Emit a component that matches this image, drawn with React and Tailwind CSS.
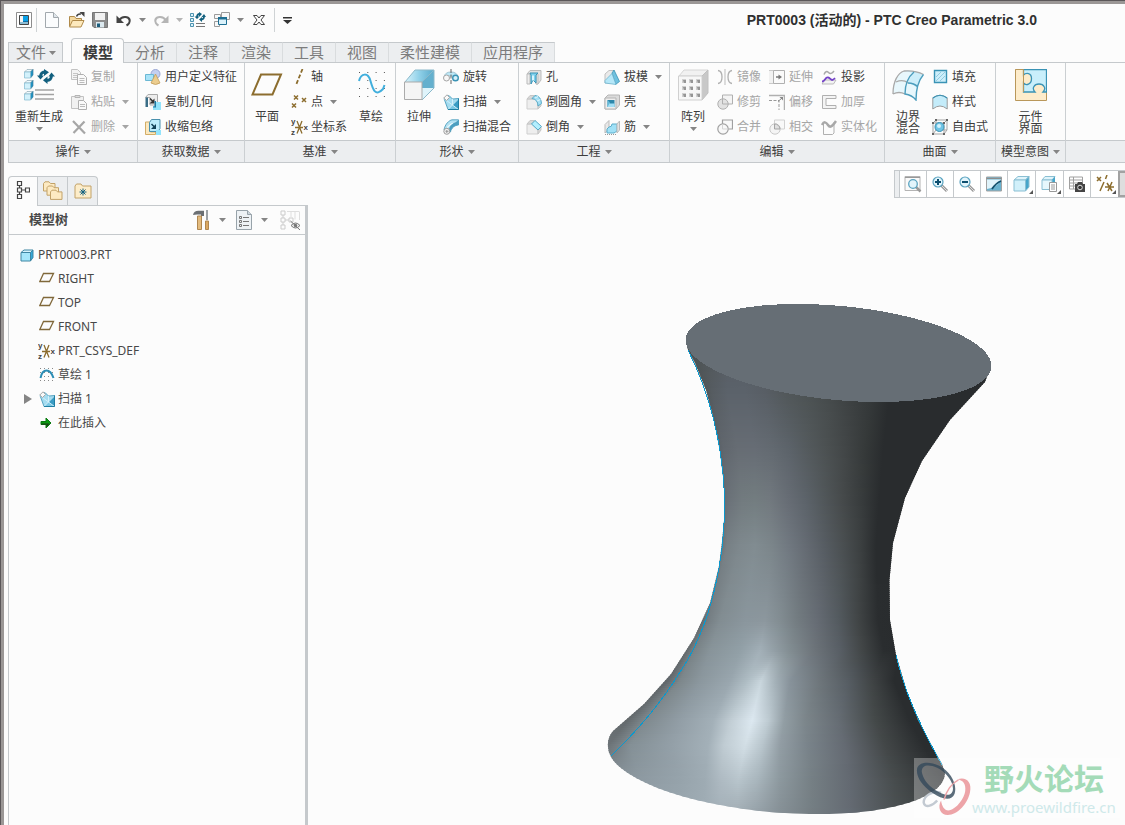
const BLUE = '#3a93b5';
const GREY = '#b0b0b0';
const GOLD = '#8c6d2e';

function Svg({ w = 16, h = 16, children }) {
  return (
    <svg
      width={w}
      height={h}
      viewBox={`0 0 ${w} ${h}`}
      fill="none"
      className="shrink-0"
      aria-hidden="true"
    >
      {children}
    </svg>
  );
}

function Caret({ color = '#858585' }) {
  return (
    <Svg w={7} h={4}>
      <path d="M0 0h7L3.500 4z" fill={color} />
    </Svg>
  );
}

function Cube({ y = 0 }) {
  return (
    <g transform={`translate(0 ${y})`}>
      <path d="M.5 3L3 .5h6L6.500 3z" fill="#eefafe" stroke="#8fa9b4" strokeWidth=".7" />
      <path d="M6.500 3L9 .5V6L6.500 9z" fill="#1f93c4" stroke="#3b7d9a" strokeWidth=".7" />
      <path d="M.5 3h6v6h-6z" fill="#d3f1fb" stroke="#7fb9d0" strokeWidth=".7" />
    </g>
  );
}

function SweepGlyph() {
  return (
    <>
      <path d="M1 4.500L6 1.500l3.500 3.500 6-.5V15.500H5z" fill="#a4dcf0" stroke={BLUE} strokeWidth=".8" />
      <path d="M9.500 11L15.500 4.500v11z" fill="#3a9cc4" />
      <path d="M5 15.500L9.500 11l6 4.500z" fill="#7cc8e4" />
      <path d="M5 15.500l4.500-4.500L1 4.500M9.500 11l6-6M9.500 11V5M9.500 11l6 4.500" stroke="#dff5fc" strokeWidth=".8" />
      <path d="M15.500 4.500v11H5" stroke="#1f7fa3" />
      <path d="M.8 4L4 .8l2.500 2.700-3 3z" stroke="#a8a8a8" fill="#fafafa" />
    </>
  );
}

function Magnifier({ sign }) {
  return (
    <Svg w={18} h={18}>
      <path d="M10.500 10.500l5.500 5.500" stroke="#9a9a9a" strokeWidth="3" />
      <path d="M11 11l5 5" stroke="#dedede" />
      <circle cx="7" cy="7" r="5" fill="#e2f4fb" stroke="#5aa3c0" strokeWidth="1.200" />
      <path d={sign === '+' ? 'M4 7h6M7 4v6' : 'M4 7h6'} stroke="#0c4f70" strokeWidth="2" />
    </Svg>
  );
}

const icons = {
  app: (
    <Svg>
      <path d="M.5.5h15v15H.5z" fill="#fff" stroke="#8d8d8d" />
      <path d="M3.500 3.500h9v9h-9z" fill="#0b6ea8" stroke="#444" />
      <path d="M4 4h3v6H4z" fill="#f4f4f4" />
      <path d="M4 10h8v2H4z" fill="#8ebdd4" />
      <path d="M7 4h5v5H7z" fill="#0aa0e6" />
    </Svg>
  ),
  newFile: (
    <Svg w={14}>
      <path d="M.5.5h8l5 5v10H.5z" fill="#fbfcfd" stroke="#a2a8ad" />
      <path d="M8.500.5v5h5" fill="#dfe5ea" stroke="#a2a8ad" />
    </Svg>
  ),
  open: (
    <Svg w={17}>
      <path d="M1.500 14V4.500h5L8 6.500h5.500V9" fill="#f4d9a0" stroke="#b08a4a" />
      <path d="M1.500 15L4.500 8.500h11.500L13 15z" fill="#fde9bd" stroke="#b08a4a" />
      <path d="M8.500 4.500Q9.500 1.500 13 2" stroke="#444" strokeWidth="1.500" />
      <path d="M11.500 0h5v5z" fill="#444" />
    </Svg>
  ),
  save: (
    <Svg>
      <path d="M.5.5h15v15H2L.5 14z" fill="#8c8c8c" stroke="#777" />
      <path d="M3 1h10v7H3z" fill="#f2f2f2" />
      <path d="M4 10h8v5.500H4z" fill="#dce9ef" />
      <path d="M5 11.500h3V15H5z" fill="#1d5e7d" />
    </Svg>
  ),
  undo: (
    <Svg>
      <path d="M3 8.500C6 4 12 4 13.500 7.500c.8 2.500-1 5-3 6" stroke="#444" strokeWidth="2.200" />
      <path d="M.5 3.500V11H8z" fill="#444" />
    </Svg>
  ),
  redo: (
    <Svg>
      <path d="M13 8.500C10 4 4 4 2.500 7.500c-.8 2.500 1 5 3 6" stroke="#b5b5b5" strokeWidth="2.200" />
      <path d="M15.500 3.500V11H8z" fill="#b5b5b5" />
    </Svg>
  ),
  regenSmall: (
    <Svg>
      <path d="M.5 1.500h3v3h-3zM.5 6.500h3v3h-3zM.5 11.500h3v3h-3z" fill="#d9f1fa" stroke="#4d93b0" />
      <path d="M6 11.500h9M6 14.500h9" stroke="#777" />
      <path d="M7 5Q7 2 9.500 2M14 4Q14 7.500 11.500 7.500" stroke="#12607f" strokeWidth="1.800" />
      <path d="M9 0l3 2-3 3zM12 5L9 7.500l3 2.500zM4.500 4.500h5L7 7zM11.500 5h4.500L14 2z" fill="#12607f" />
    </Svg>
  ),
  windows: (
    <Svg>
      <path d="M7.500.5h8v7h-8zM.5 2.500h6v4h-6zM.5 9.500h5v5h-5z" fill="#f8f8f8" stroke="#9b9b9b" />
      <path d="M4.500 5.500h8v7h-8z" fill="#dbf2fb" stroke="#1e6f93" />
      <path d="M4 5h9v2.500H4z" fill="#1e6f93" />
    </Svg>
  ),
  close: (
    <Svg w={12} h={10}>
      <path
        d="M.5.500h3.500l2 2.500L8 .5h3.500L8 5l3.500 4.500H8L6 7 4 9.500H.5L4 5z"
        fill="#fcfcfc"
        stroke="#444"
      />
    </Svg>
  ),
  more: (
    <Svg w={9} h={7}>
      <path d="M0 0h9v1.500H0zM0 3h9L4.500 7z" fill="#333" />
    </Svg>
  ),
  regenerate: (
    <Svg w={32} h={32}>
      <g transform="translate(1 0)">
        <Cube />
        <Cube y={11} />
        <Cube y={22} />
      </g>
      <path d="M12 21h19M12 25.500h19M12 30h19" stroke="#a2a2a2" strokeWidth="1.600" />
      <path d="M17.500 7.500Q17.500 3 22.500 3M28.500 6.500Q28.500 11.500 23.500 11.500" stroke="#12607f" strokeWidth="2.800" />
      <path d="M21 0l5 3.200-5 3.800zM24.500 7.500L20 11.300l4.500 3.700zM14 6.500h7L17.500 10.500zM25.500 7.500h6.500L28.500 3.500z" fill="#12607f" />
    </Svg>
  ),
  copy: (
    <Svg>
      <path d="M.5.5h6l3 3v7h-9z" fill="#f4f4f4" stroke="#c2c2c2" />
      <path d="M2 4.500h5M2 6.500h5M2 8.500h4" stroke="#c6c6c6" />
      <path d="M6.500 5.500h6l3 3v7h-9z" fill="#fafafa" stroke="#b0b0b0" />
      <path d="M8.500 9.500h5M8.500 11.500h5M8.500 13.500h5" stroke="#bbb" />
    </Svg>
  ),
  paste: (
    <Svg>
      <path d="M.5 2.500h12v12H.5z" fill="#f1f1f1" stroke="#c2c2c2" />
      <path d="M4 3.500V1.500h5v2z" fill="#ddd" stroke="#b4b4b4" />
      <path d="M7.500 6.500h5l3 3v6h-8z" fill="#fafafa" stroke="#b0b0b0" />
      <path d="M9 10.500h5M9 12.500h5" stroke="#bbb" />
    </Svg>
  ),
  del: (
    <Svg>
      <path d="M2 2l12 12.500M13.500 2.500L2.500 14" stroke="#a6a6a6" strokeWidth="2.200" />
    </Svg>
  ),
  udf: (
    <Svg>
      <circle cx="10.500" cy="5" r="4.500" fill="#c3cff0" stroke="#98a6d3" />
      <path d="M.5 5.500h8v6h-8z" fill="#a8e3f8" stroke="#6bb8d4" />
      <path d="M10.500 5l4.500 9q-4.500 3-9 0z" fill="#eccd8e" stroke="#c09a58" strokeWidth=".8" />
    </Svg>
  ),
  copyGeom: (
    <Svg>
      <path d="M.5 3.500L3 .5h9.500V8L10 11H5V3.500z" fill="#ededed" stroke="#aaa" />
      <path d="M.5 3.500H3V13H.5z" fill="#3a6d86" />
      <path d="M5 4.500l3 3" stroke="#333" strokeWidth="1.500" />
      <path d="M9.500 4.500v5h-5z" fill="#333" />
      <path d="M10.500 8h5.500v8h-8V12h2.500z" fill="#93e4fc" />
      <path d="M9.500 12.500V7h1.500v6.500H8v-1z" fill="#1e7ba3" />
    </Svg>
  ),
  shrink: (
    <Svg>
      <path d="M.5 3h5v10h5v2.500H.5z" fill="#fbe8bf" stroke="#d2ad67" />
      <path d="M4.500 3.500l2-3h8.500v9l-2 3H4.500z" fill="#bdebfa" stroke="#4a90ad" />
      <path d="M6.500 5l3 3" stroke="#113f55" strokeWidth="1.500" />
      <path d="M11 5v5H6z" fill="#113f55" />
      <path d="M11 11h5v5h-5z" fill="#93e4fc" />
    </Svg>
  ),
  plane: (
    <Svg w={32} h={32}>
      <path d="M10 5.500h20L21.500 25.500h-20z" stroke={GOLD} strokeWidth="2" />
    </Svg>
  ),
  axis: (
    <Svg w={17}>
      <path d="M11.500 0L5 16" stroke={GOLD} strokeWidth="1.800" strokeDasharray="4 2" />
    </Svg>
  ),
  point: (
    <Svg w={17}>
      <path
        d="M3 1.500l4 4M7 1.500l-4 4M11 4l4 4M15 4l-4 4M1 9.500l4 4M5 9.500l-4 4"
        stroke={GOLD}
        strokeWidth="1.500"
      />
    </Svg>
  ),
  csys: (
    <Svg w={17} h={17}>
      <path d="M4 8.500h8M6 2l5 12.500M11 2L6 14.500" stroke={GOLD} strokeWidth="1.300" />
      <g fill="#444" fontSize="8" fontWeight="700" fontFamily="Liberation Sans, sans-serif">
        <text x="0" y="5">y</text>
        <text x="0" y="16">z</text>
        <text x="12.500" y="11">x</text>
      </g>
    </Svg>
  ),
  sketch: (
    <Svg w={32} h={32}>
      <path d="M4 3.500h26M4 11.500h26M4 19.500h26M4 27.500h26" stroke="#555" strokeDasharray="1 7.300" />
      <path d="M4 12C6 4 13 3 15.500 12s5 16 12.500 8l1.500-4" stroke="#41afdd" strokeWidth="2" />
    </Svg>
  ),
  extrude: (
    <Svg w={32} h={32}>
      <defs>
        <linearGradient id="extrudeTop" x1="0" x2="1">
          <stop offset="0" stopColor="#d8f3fc" />
          <stop offset=".5" stopColor="#8fd0e8" />
          <stop offset="1" stopColor="#58a9ca" />
        </linearGradient>
      </defs>
      <path d="M2 13L12 1h19L19 13z" fill="url(#extrudeTop)" />
      <path d="M19 13L31 1v18L19 31z" fill="#dff4fb" />
      <path d="M19 13L31 1v18h-12z" fill="#64b0ce" />
      <path d="M2 13L12 1h19v18L19 31M19 13L31 1" stroke="#8bb9ca" />
      <path d="M1.500 13h17.500v17.500H1.500z" fill="#f5f5f5" stroke="#ababab" />
    </Svg>
  ),
  revolve: (
    <Svg>
      <path d="M1 8Q2 3 8 3t7 5l-4-1H5z" fill="#bce7f6" stroke="#a0c4d2" />
      <circle cx="3.500" cy="9" r="3" fill="#f7f7f7" stroke="#a5a5a5" />
      <circle cx="12.500" cy="9" r="2.800" fill="#d4f0fa" stroke={BLUE} strokeWidth="1.400" />
      <path d="M8 0v16" stroke="#666" strokeDasharray="4 1.500" />
    </Svg>
  ),
  sweep: (
    <Svg>
      <SweepGlyph />
    </Svg>
  ),
  sweptBlend: (
    <Svg>
      <path d="M1 11C2 5 6 1.500 9 .8h6.500V6C12 6 8 9 7.500 13z" fill="#b5e2f2" stroke={BLUE} strokeWidth=".8" />
      <path d="M4 8.500Q7 4 14 3.500" stroke="#fff" />
      <path d="M15.500 1v5C12 6 8 9 7.500 13L6 11c0-4 4-7 7-8z" fill="#4d9fc0" />
      <circle cx="3.800" cy="12.300" r="3" fill="#f1f1f1" stroke="#9d9d9d" />
      <path d="M3.800 11v3M2.500 12.300h3" stroke="#999" />
    </Svg>
  ),
  hole: (
    <Svg>
      <path d="M1 5l3-3.500h11V11l-3 4h-2V5z" fill="#e2e2e2" stroke="#bbb" />
      <path d="M1 5h3v10H1zM10 5h2v10h-2z" fill="#ededed" stroke="#bbb" />
      <path d="M4 4h8l-2 2v8l-3-3-2 4V6z" fill="#7fd2ef" stroke={BLUE} />
      <path d="M7 6.500v5" stroke="#d9f4fd" strokeWidth="2" />
    </Svg>
  ),
  round: (
    <Svg>
      <path d="M1 5h6q5 0 5 5v5H1z" fill="#eee" stroke="#cfcfcf" />
      <path d="M1 5l3-3.500h5L7 5zM12 9l3 1v2l-3 3z" fill="#d8d8d8" stroke="#c6c6c6" />
      <path d="M6 4.500L9 1.500q6 .5 6.500 8L12 12Q12 5.500 6 4.500z" fill="#a5e1f6" stroke="#58a9c6" />
      <path d="M9 4l3-1.500M11 7l3.500-1.500" stroke="#e0f6fd" />
    </Svg>
  ),
  chamfer: (
    <Svg>
      <path d="M1 5h5l6 6v4H1z" fill="#eee" stroke="#cfcfcf" />
      <path d="M1 5l3-3.500h5L6 5zM12 11l3-3v3l-3 4z" fill="#d8d8d8" stroke="#c6c6c6" />
      <path d="M5.500 5L9 1.500l6.500 6L12 11z" fill="#b3efff" stroke="#58a9c6" />
    </Svg>
  ),
  draft: (
    <Svg>
      <path d="M1 5l4-3.500h5V14H1z" fill="#eaeaea" stroke="#c0c0c0" />
      <path d="M8 4l2-3 5.500 11.500-4 3z" fill="#6fc1df" stroke={BLUE} strokeWidth=".8" />
      <path d="M1 11.500l7-7 4 11L1 14z" fill="#b5e7f8" stroke="#6db4ce" strokeWidth=".8" />
    </Svg>
  ),
  shell: (
    <Svg>
      <path d="M1 4l3-3h11.500v10L12 15H1z" fill="#dadada" stroke="#b5b5b5" />
      <path d="M1 4h11v11H1z" fill="#ededed" stroke="#b5b5b5" />
      <path d="M3.500 6h7v7h-7z" fill="#2d87aa" />
      <path d="M3.500 13V6L6 8.500V13z" fill="#66b9d8" />
      <path d="M5.500 9.500h5V13h-7z" fill="#a2dff5" />
    </Svg>
  ),
  rib: (
    <Svg>
      <path d="M1 5.500l4-4v8L1 14z" fill="#e8e8e8" stroke="#bbb" />
      <path d="M5 8q3 0 3-3h5v7l-3 2H3v-4z" fill="#a0e1f7" stroke="#5cadca" />
      <path d="M1 15.500h12" stroke="#999" strokeDasharray="1 1" />
      <path d="M13 5l2.500-3v9L13 14z" fill="#e2e2e2" stroke="#bbb" />
    </Svg>
  ),
  pattern: (
    <Svg w={32} h={32}>
      <path d="M2 7l5-6h24l-6 6z" fill="#f1f1f1" stroke="#d6d6d6" />
      <path d="M25 7l6-6v23l-6 7z" fill="#c8c8c8" stroke="#c0c0c0" />
      <path d="M1.500 7H25v24H1.500z" fill="#f7f7f7" stroke="#d0d0d0" />
      {[10, 17, 24].map((y) =>
        [5, 12, 19].map((x) => (
          <g key={`${x}-${y}`}>
            <path d={`M${x} ${y}h4v4h-4z`} fill="#cfcfcf" />
            <path d={`M${x + 1} ${y + 1}h3v3h-2z`} fill="#959595" />
          </g>
        )),
      )}
    </Svg>
  ),
  mirror: (
    <Svg>
      <path d="M8 0v16" stroke="#bbb" />
      <path d="M1 1.500Q5 2 5 8t-4 6.500M15 1.500Q11 2 11 8t4 6.500" stroke={GREY} strokeWidth="1.300" />
    </Svg>
  ),
  trim: (
    <Svg>
      <path d="M5.500 1h10v9h-10z" fill="#f4f4f4" stroke={GREY} />
      <circle cx="6" cy="10" r="5.200" stroke={GREY} fill="#e2e2e2" />
      <path d="M5.500 10V5M5.500 10h6" stroke={GREY} />
    </Svg>
  ),
  merge: (
    <Svg>
      <path d="M5.500 1h10v9h-10z" fill="#f9f9f9" stroke="#a0a0a0" strokeWidth="1.200" />
      <circle cx="6" cy="10" r="5.200" stroke="#a0a0a0" strokeWidth="1.200" fill="#f8f8f8" />
      <path d="M5.500 10V5M5.500 10h6" stroke="#d5d5d5" />
    </Svg>
  ),
  extend: (
    <Svg>
      <path d="M0 1.500h4.500v13H0" fill="#f1f1f1" stroke="#c9c9c9" />
      <path d="M4.500 1.500h11v13h-11z" stroke={GREY} fill="#fafafa" />
      <path d="M7 8h3" stroke="#777" strokeWidth="1.500" />
      <path d="M9.500 5.500L13 8l-3.500 2.500z" fill="#777" />
    </Svg>
  ),
  offset: (
    <Svg>
      <path d="M0 1.500h15.500V16" stroke={GREY} strokeWidth="1.500" />
      <path d="M0 6.500h10V16" stroke="#999" strokeDasharray="3 1.500" />
      <path d="M9 7.500L13 4" stroke="#888" />
      <path d="M10.500 3H14v3.500z" fill="#888" />
    </Svg>
  ),
  intersect: (
    <Svg>
      <path d="M5.500 1h10v9h-10z" fill="#f9f9f9" stroke="#d2d2d2" />
      <circle cx="6" cy="10" r="5.200" stroke="#c9c9c9" fill="#f4f4f4" />
      <path d="M5.500 5a5.200 5.200 0 015.500 5H5.500z" stroke="#a5a5a5" fill="#e0e0e0" />
    </Svg>
  ),
  project: (
    <Svg>
      <path d="M3 5.500Q5 1 7.500 3.500T13 2" stroke="#aaa" strokeWidth="1.500" />
      <path d="M1 15l3-4h11l-2.500 4z" stroke="#bbb" fill="#f3f3f3" />
      <path d="M1 12.500c3 0 3-4.500 6-4s3 5 7 .5" stroke="#7442c8" strokeWidth="1.800" />
    </Svg>
  ),
  thicken: (
    <Svg>
      <path d="M15 1.500H1.500v13H15v-3H5v-7h10z" stroke={GREY} fill="#f4f4f4" />
    </Svg>
  ),
  solidify: (
    <Svg>
      <path d="M2.500 5v10.500h9L13 14V3" stroke={GREY} />
      <path d="M1 6c2-4 4-3 6 0s4 2 8-4" stroke="#a8a8a8" strokeWidth="2.500" />
    </Svg>
  ),
  boundary: (
    <Svg w={32} h={32}>
      <path d="M1 25C1 12 6 4 12 2q11-1 19.500 3.500C26 12 25 22 24 31q-6-7-11-6-6-3-12 0z" fill="#e8f7fc" />
      <path d="M12 2q11-1 19.500 3.500C28 10 26 14 25.500 20Q21 14 14 14L21 4z" fill="#cdeefa" />
      <path d="M1 25C1 12 6 4 12 2q11-1 19.500 3.500M1 25q6-3 12 0M4 13q7-3 12 1" stroke="#a9a9a9" strokeWidth="1.300" />
      <path d="M22 3c-6 5-9 13-9 22q7 1 11 6c0-10 2-19 7.500-25.500M16 14q6 0 10 4" stroke="#4b9dbd" strokeWidth="1.400" />
    </Svg>
  ),
  fill: (
    <Svg>
      <path d="M2.500 1.500h12v12h-12z" fill="#cdeefa" stroke={BLUE} strokeWidth="1.400" />
      <path d="M4 8l5-5M4 12l9-9M8 12l5-5" stroke="#93cbe0" />
    </Svg>
  ),
  style: (
    <Svg>
      <path d="M.8 4Q8-1.500 15.200 4v11Q8 9 .8 15z" fill="#c4ecfa" stroke="#9a9a9a" />
      <path d="M.8 4Q8-1.500 15.200 4" stroke={BLUE} strokeWidth="1.200" />
    </Svg>
  ),
  freestyle: (
    <Svg>
      <path d="M1 4l3-3h11v10l-3 4H1zM1 4h11v11M12 4l3-3M4 1v10H15M4 11l-3 4" stroke="#a5a5a5" />
      <circle cx="7.500" cy="8" r="4.500" fill="#72c5e6" stroke={BLUE} />
      <circle cx="7" cy="7" r="2" fill="#d6f3fd" />
      <path d="M0 3h2v2H0zM11 3h2v2h-2zM0 14h2v2H0zM11 14h2v2h-2zM3 0h2v2H3zM14 0h2v2h-2z" fill="#666" />
    </Svg>
  ),
  component: (
    <Svg w={32} h={32}>
      <path d="M.5.5h31v31H.5z" fill="#fdeccb" stroke="#b9975a" />
      <path
        d="M8.500.5V6c2.500-2.500 8-2.500 8 3.500s-5.500 7.500-8 4.500v9H20c-3.500-3.500-1-8 4-8s7.500 4.500 4 8h3.500V.5z"
        fill="#c9effb"
        stroke="#3a93b5"
        strokeWidth="1.300"
      />
      <path d="M.5.5h8v22.500" stroke="#b9975a" />
    </Svg>
  ),
  treeTab: (
    <Svg w={14} h={20}>
      <path
        d="M1.500 1.500h4v4h-4zM1.500 8h4v4h-4zM1.500 14.500h4v4h-4zM9.500 8h4v4h-4zM3.500 5.500V8M3.500 12v2.500M5.500 10h4"
        stroke="#444"
        strokeWidth="1.200"
      />
    </Svg>
  ),
  foldersTab: (
    <Svg w={20} h={20}>
      {[0, 3.500, 7].map((d) => (
        <path
          key={d}
          d="M.5 10V2.500L2 .8h4l1.500 1.700H12V10z"
          transform={`translate(${d} ${d * 1.2})`}
          fill="#fdeac2"
          stroke="#c2a268"
        />
      ))}
    </Svg>
  ),
  starTab: (
    <Svg w={18} h={16}>
      <path d="M1 15V3l1.500-2H7l1.500 2H17v12z" fill="#fdedca" stroke="#c2a268" />
      <path d="M9 5.500v7M5.500 9h7M6.500 6.500l5 5M11.500 6.500l-5 5" stroke="#12607f" />
    </Svg>
  ),
  tools: (
    <Svg w={17} h={20}>
      <path d="M0 5Q1 .5 6 .8h5V6H8V4.500H4z" fill="#6b6f73" />
      <path d="M4.500 6h4v13.500h-4z" fill="#e3bb7e" stroke="#b08750" />
      <path d="M14 0v10" stroke="#858b90" strokeWidth="1.600" />
      <path d="M12.500 11h3v8.500h-3z" fill="#dba863" stroke="#b08750" />
    </Svg>
  ),
  list: (
    <Svg w={16} h={20}>
      <path d="M.5.5h11l4 4v15H.5z" fill="#eef2f5" stroke="#98a3aa" />
      <path d="M11.500.5v4h4" stroke="#98a3aa" fill="#cdd6dc" />
      <path d="M7 7.500h6M7 11.500h6M7 15.500h6" stroke="#777" />
      <path d="M3.500 6.500h2v2h-2zM3.500 10.500h2v2h-2zM3.500 14.500h2v2h-2z" stroke="#777" />
    </Svg>
  ),
  hideTree: (
    <Svg w={21} h={20}>
      <path d="M1 1h4v4H1zM1 8h4v4H1zM1 15h4v4H1zM9 8h4v4H9zM3 5v3M3 12v3M5 10h4" stroke="#ccc" />
      <path d="M7 1.500h12M11 1.500V7M15 1.500v8M19.500 1.500V10" stroke="#dedede" />
      <path d="M11 15.500q4.500-5 9 0-4.500 5-9 0z" stroke="#777" fill="#eee" />
      <circle cx="15.500" cy="15.500" r="1.700" fill="#777" />
      <path d="M10.500 11l9.500 9" stroke="#777" />
    </Svg>
  ),
  part: (
    <Svg w={14} h={13}>
      <path d="M1 3.500L4 1h9l-2.500 2.500z" fill="#d7f4fd" stroke="#3f86a3" />
      <path d="M10.500 3.500L13 1v7.500l-2.500 3.500z" fill="#36a8d8" stroke="#3f86a3" />
      <path d="M1 3.500h9.500V12H1z" fill="#a5e7fb" stroke="#3f86a3" />
    </Svg>
  ),
  planeSmall: (
    <Svg>
      <path d="M4.500 2.500h10l-4 8H.8z" stroke="#80683a" strokeWidth="1.300" />
    </Svg>
  ),
  sketchSmall: (
    <Svg>
      <path d="M1 1.500h14M1 5.500h14M1 9.500h14M1 13.500h14" stroke="#888" strokeDasharray="1 3" />
      <path d="M1.500 11Q3 3.500 7.500 3.500T14.500 11" stroke="#2b8db5" strokeWidth="2" />
    </Svg>
  ),
  insert: (
    <Svg w={16} h={12}>
      <path d="M2 4.500h5V1l5 5-5 5V7.500H2z" fill="#0a9b12" stroke="#0a7a10" />
      <path d="M2.500 6.500h8L7.500 10V7.500h-5z" fill="#1d3b16" />
    </Svg>
  ),
  refit: (
    <Svg w={18} h={18}>
      <path d="M1 1.500h15v14H1z" fill="#fafafa" stroke="#b4b4b4" />
      <path d="M1 2.500h15" stroke="#999" />
      <path d="M12 12l4.500 4.500" stroke="#9a9a9a" strokeWidth="2.500" />
      <circle cx="9" cy="9" r="4.300" fill="#e2f4fb" stroke="#5aa3c0" strokeWidth="1.300" />
    </Svg>
  ),
  zoomIn: <Magnifier sign="+" />,
  zoomOut: <Magnifier sign="-" />,
  repaint: (
    <Svg>
      <path d="M.5 1h15v14H.5z" fill="#6ab2ce" stroke="#a2a2a2" />
      <path d="M1 3.500H15Q12 11 1 13z" fill="#e0f3fa" />
      <path d="M.5 2.500h15" stroke="#8c8c8c" />
      <path d="M6 13Q10 7 15 5" stroke="#12506c" strokeWidth="1.800" />
    </Svg>
  ),
  display: (
    <Svg w={18} h={18}>
      <path d="M1 5l4-3.500h11L12.500 5z" fill="#e0f4fb" stroke="#8abfd3" />
      <path d="M12.500 5L16 1.500V12l-3.500 4z" fill="#46a5ca" stroke="#8abfd3" />
      <path d="M1 5h11.500v11H1z" fill="#d1f0fa" stroke="#8abfd3" />
    </Svg>
  ),
  views: (
    <Svg w={18} h={18}>
      <path d="M1 5l3-3.500h10L11 5z" fill="#e0f4fb" stroke="#8abfd3" />
      <path d="M11 5l3-3.500V11l-3 3.500z" fill="#46a5ca" />
      <path d="M1 5h10v9.500H1z" fill="#e6f7fc" stroke="#8abfd3" />
      <path d="M8.500 7.500h7v9h-7z" fill="#fff" stroke="#999" />
      <path d="M10 10h4M10 12h4M10 14h4" stroke="#999" />
    </Svg>
  ),
  camera: (
    <Svg w={18} h={18}>
      <path d="M1.500 2h13v12h-13zM1.500 5h13M1.500 8h13M1.500 11h13M5.500 2v12" stroke="#a0a0a0" />
      <path d="M7 9h2l1-2h4l1 2h2v8H7z" fill="#444" />
      <circle cx="12" cy="12.500" r="2.300" fill="#333" stroke="#ddd" />
    </Svg>
  ),
  datums: (
    <Svg w={18} h={18}>
      <path d="M1 2l4 4M5 2L1 6M11 0L9.500 4M8 7L4 16M9 12h9M11 8l5 8M16 7l-4 9" stroke={GOLD} strokeWidth="1.500" />
    </Svg>
  ),
};

function Divider() {
  return <div className="h-6 w-px bg-[#cfd3d5]" />;
}

function QuickButton({ icon, label, menu, faded }) {
  return (
    <div className="flex items-center">
      <button type="button" aria-label={label} className="flex h-6 w-6 items-center justify-center">
        {icons[icon]}
      </button>
      {menu && (
        <button type="button" aria-label={`${label}菜单`} className="flex h-6 w-[13px] items-center justify-center">
          <Caret color={faded ? '#b5b5b5' : '#858585'} />
        </button>
      )}
    </div>
  );
}

function TitleBar() {
  return (
    <header className="flex h-[34px] items-center pb-[2px] pl-2">
      <QuickButton icon="app" label="窗口" />
      <Divider />
      <div className="mx-[3px] flex">
        <QuickButton icon="newFile" label="新建" />
        <QuickButton icon="open" label="打开" />
        <QuickButton icon="save" label="保存" />
        <QuickButton icon="undo" label="撤消" menu />
        <QuickButton icon="redo" label="重做" menu faded />
        <QuickButton icon="regenSmall" label="重新生成" />
        <QuickButton icon="windows" label="切换窗口" menu />
        <QuickButton icon="close" label="关闭" />
      </div>
      <Divider />
      <QuickButton icon="more" label="自定义" />
      <h1 className="ml-auto mr-[88px] whitespace-nowrap text-sm font-bold text-[#303030]">
        PRT0003 (活动的) - PTC Creo Parametric 3.0
      </h1>
    </header>
  );
}

const tabs = ['模型', '分析', '注释', '渲染', '工具', '视图', '柔性建模', '应用程序'];

function RibbonTabs() {
  return (
    <nav className="flex items-end pl-1 text-[15px] leading-[18px] text-[#7c7c7c]">
      <button
        type="button"
        className="mr-2 flex h-5 w-[55px] items-center gap-[3px] border border-b-0 border-[#c5c9cc] bg-[#eceef0] pl-[7px]"
      >
        文件
        <Caret />
      </button>
      {tabs.map((tab, i) => (
        <button
          key={tab}
          type="button"
          className={
            i === 0
              ? 'relative -mb-px h-[25px] rounded-t-sm border border-b-0 border-[#c5c9cc] bg-[#fcfcfc] pl-[11px] pr-[10px] pt-[3px] font-bold text-[#3c3c3c]'
              : 'h-5 border-r border-t border-r-[#d9dcde] border-t-[#c5c9cc] bg-[#eceef0] px-[11px]'
          }
        >
          {tab}
        </button>
      ))}
    </nav>
  );
}

function SmallButton({ icon, label, menu, disabled }) {
  return (
    <button
      type="button"
      disabled={disabled}
      className={`flex h-6 items-center gap-1 whitespace-nowrap ${disabled ? 'text-[#a6a6a6]' : 'text-[#3c3c3c]'}`}
    >
      <span className="flex w-4 justify-center">{icons[icon]}</span>
      {label}
      {menu && (
        <span className="ml-[3px]">
          <Caret color={disabled ? '#a5a5a5' : '#858585'} />
        </span>
      )}
    </button>
  );
}

function Stack({ items }) {
  return (
    <div className="flex h-[74px] flex-col items-start justify-between">
      {items.map((item) => (
        <SmallButton key={item.label} {...item} />
      ))}
    </div>
  );
}

function BigButton({ icon, label, menu }) {
  return (
    <button type="button" className="flex flex-col items-center pt-1 text-[#3c3c3c]">
      {icons[icon]}
      <span className="mt-[10px] whitespace-pre leading-3">{label}</span>
      {menu && (
        <span className="mt-1 flex">
          <Caret />
        </span>
      )}
    </button>
  );
}

function Group({ title, className, children }) {
  return (
    <section className="flex shrink-0 flex-col border-r border-[#cbcfd2]">
      <div className={`flex h-[77px] items-start pt-[2px] ${className}`}>{children}</div>
      <button
        type="button"
        className="flex h-[22px] items-center justify-center gap-1 border-t border-[#c5c9cc] text-[#3c3c3c]"
      >
        {title}
        <Caret />
      </button>
    </section>
  );
}

function Ribbon() {
  return (
    <div className="ml-1 flex overflow-hidden border-y border-l border-[#c5c9cc] bg-[linear-gradient(#fcfcfc_77px,#c5c9cc_77px,#c5c9cc_78px,#eceef0_78px)] text-xs">
      <Group title="操作" className="w-32 gap-2 pl-[6px]">
        <BigButton icon="regenerate" label="重新生成" menu />
        <Stack
          items={[
            { icon: 'copy', label: '复制', disabled: true },
            { icon: 'paste', label: '粘贴', menu: true, disabled: true },
            { icon: 'del', label: '删除', menu: true, disabled: true },
          ]}
        />
      </Group>
      <Group title="获取数据" className="w-[106px] pl-[7px]">
        <Stack
          items={[
            { icon: 'udf', label: '用户定义特征' },
            { icon: 'copyGeom', label: '复制几何' },
            { icon: 'shrink', label: '收缩包络' },
          ]}
        />
      </Group>
      <Group title="基准" className="w-[150px] gap-2 pl-[6px]">
        <BigButton icon="plane" label="平面" />
        <Stack
          items={[
            { icon: 'axis', label: '轴' },
            { icon: 'point', label: '点', menu: true },
            { icon: 'csys', label: '坐标系' },
          ]}
        />
        <BigButton icon="sketch" label="草绘" />
      </Group>
      <Group title="形状" className="w-[122px] gap-2 pl-[7px]">
        <BigButton icon="extrude" label="拉伸" />
        <Stack
          items={[
            { icon: 'revolve', label: '旋转' },
            { icon: 'sweep', label: '扫描', menu: true },
            { icon: 'sweptBlend', label: '扫描混合' },
          ]}
        />
      </Group>
      <Group title="工程" className="w-[150px] gap-2 pl-[7px]">
        <Stack
          items={[
            { icon: 'hole', label: '孔' },
            { icon: 'round', label: '倒圆角', menu: true },
            { icon: 'chamfer', label: '倒角', menu: true },
          ]}
        />
        <Stack
          items={[
            { icon: 'draft', label: '拔模', menu: true },
            { icon: 'shell', label: '壳' },
            { icon: 'rib', label: '筋', menu: true },
          ]}
        />
      </Group>
      <Group title="编辑" className="w-[214px] gap-2 pl-[7px]">
        <BigButton icon="pattern" label="阵列" menu />
        <Stack
          items={[
            { icon: 'mirror', label: '镜像', disabled: true },
            { icon: 'trim', label: '修剪', disabled: true },
            { icon: 'merge', label: '合并', disabled: true },
          ]}
        />
        <Stack
          items={[
            { icon: 'extend', label: '延伸', disabled: true },
            { icon: 'offset', label: '偏移', disabled: true },
            { icon: 'intersect', label: '相交', disabled: true },
          ]}
        />
        <Stack
          items={[
            { icon: 'project', label: '投影' },
            { icon: 'thicken', label: '加厚', disabled: true },
            { icon: 'solidify', label: '实体化', disabled: true },
          ]}
        />
      </Group>
      <Group title="曲面" className="w-[110px] gap-2 pl-[7px]">
        <BigButton icon="boundary" label={'边界\n混合'} />
        <Stack
          items={[
            { icon: 'fill', label: '填充' },
            { icon: 'style', label: '样式' },
            { icon: 'freestyle', label: '自由式' },
          ]}
        />
      </Group>
      <Group title="模型意图" className="w-[69px] justify-center">
        <BigButton icon="component" label={'元件\n界面'} />
      </Group>
    </div>
  );
}

const treeItems = [
  { icon: 'planeSmall', label: 'RIGHT' },
  { icon: 'planeSmall', label: 'TOP' },
  { icon: 'planeSmall', label: 'FRONT' },
  { icon: 'csys', label: 'PRT_CSYS_DEF' },
  { icon: 'sketchSmall', label: '草绘 1' },
  { icon: 'sweep', label: '扫描 1', expandable: true },
  { icon: 'insert', label: '在此插入' },
];

function ModelTree() {
  return (
    <aside className="ml-1 flex w-[300px] shrink-0 flex-col pt-[13px]">
      <div className="flex">
        <button
          type="button"
          aria-label="模型树"
          className="relative -mb-px flex h-[30px] w-[30px] items-center justify-center rounded-tl-sm border border-b-0 border-[#c5c9cc] bg-[#fcfcfc] pb-1"
        >
          {icons.treeTab}
        </button>
        <button
          type="button"
          aria-label="文件夹浏览器"
          className="flex h-[29px] w-[30px] items-center justify-center border-r border-t border-[#c5c9cc] bg-[#eceef0]"
        >
          {icons.foldersTab}
        </button>
        <button
          type="button"
          aria-label="收藏夹"
          className="flex h-[29px] w-[30px] items-center justify-center rounded-tr-sm border-r border-t border-[#c5c9cc] bg-[#eceef0]"
        >
          {icons.starTab}
        </button>
      </div>
      <div className="flex-1 border-l border-r-[3px] border-t border-[#c5c9cc]">
        <div className="flex h-[29px] items-center border-b border-[#c5c9cc] pl-5 pr-1">
          <h2 className="mr-auto text-[13px] font-bold text-[#484848]">模型树</h2>
          <button type="button" aria-label="设置" className="flex items-center gap-[9px]">
            {icons.tools}
            <Caret />
          </button>
          <button type="button" aria-label="显示" className="ml-[10px] flex items-center gap-[9px]">
            {icons.list}
            <Caret />
          </button>
          <button type="button" aria-label="隐藏树" className="ml-3">
            {icons.hideTree}
          </button>
        </div>
        <ul className="pt-2 text-xs text-[#484848] [font-family:'Noto_Sans','Noto_Sans_CJK_SC',sans-serif]">
          <li className="flex h-6 items-center gap-1 pl-[11px]">
            {icons.part}
            PRT0003.PRT
          </li>
          {treeItems.map((item) => (
            <li key={item.label} className="flex h-6 items-center pl-[15px]">
              <span className="w-[14px]">
                {item.expandable && (
                  <Svg w={8} h={10}>
                    <path d="M0 0l8 5-8 5z" fill="#858585" />
                  </Svg>
                )}
              </span>
              <span className="mr-[3px] flex w-[17px] justify-center">{icons[item.icon]}</span>
              {item.label}
            </li>
          ))}
        </ul>
      </div>
    </aside>
  );
}

const viewTools = [
  { icon: 'refit', label: '重新调整' },
  { icon: 'zoomIn', label: '放大' },
  { icon: 'zoomOut', label: '缩小' },
  { icon: 'repaint', label: '重画' },
  { icon: 'display', label: '显示样式', menu: true },
  { icon: 'views', label: '已保存方向', menu: true },
  { icon: 'camera', label: '视图管理器' },
  { icon: 'datums', label: '基准显示', menu: true },
];

function ViewToolbar() {
  return (
    <div className="ml-auto mt-[7px] flex h-7 border-y border-l border-[#c5c9cc] bg-white">
      <div className="w-1 bg-[#eceef0]" />
      {viewTools.map((tool) => (
        <button
          key={tool.label}
          type="button"
          aria-label={tool.label}
          className={`relative flex items-center justify-center border-l border-[#c5c9cc] ${tool.menu ? 'w-7' : 'w-[27px]'}`}
        >
          {icons[tool.icon]}
          {tool.menu && (
            <svg width="4" height="4" className="absolute bottom-[3px] right-[2px]" aria-hidden="true">
              <path d="M4 0v4H0z" fill="#555" />
            </svg>
          )}
        </button>
      ))}
      <button type="button" aria-label="注释显示" className="w-[7px] border-2 border-r-0 border-[#a2a2a2] bg-[#dedede]" />
    </div>
  );
}

// Surface shading: for each height, [x, colour] stops from left to right.
const shading = [
  [335, [[686, '#4a4f50'], [706, '#4f5557'], [730, '#535960'], [745, '#555c64'], [762, '#535a5e'], [787, '#4c5152'], [810, '#474c4d'], [833, '#414546'], [856, '#393d3e'], [878, '#323637'], [896, '#292c2e'], [960, '#292c2e']]],
  [390, [[706, '#51575a'], [712, '#565c61'], [727, '#5b626a'], [745, '#5b626a'], [765, '#585e65'], [787, '#515759'], [808, '#4c5253'], [830, '#454a4b'], [852, '#3c4041'], [872, '#343839'], [890, '#292c2e'], [950, '#292c2e']]],
  [450, [[718, '#5a6066'], [724, '#61676e'], [738, '#676d74'], [755, '#676d75'], [772, '#636a71'], [790, '#5c636a'], [808, '#545a5d'], [826, '#4c5152'], [845, '#424647'], [865, '#353939'], [883, '#292c2e'], [930, '#292c2e']]],
  [500, [[723, '#656b71'], [729, '#6b7279'], [742, '#727b7f'], [755, '#737d80'], [770, '#72797f'], [788, '#676d75'], [806, '#5c636a'], [824, '#51575a'], [842, '#464a4b'], [862, '#373b3c'], [879, '#292c2e'], [910, '#292c2e']]],
  [545, [[721, '#6b7276'], [727, '#778085'], [740, '#7e888d'], [755, '#818c91'], [772, '#7b858a'], [789, '#707880'], [807, '#646a72'], [825, '#565c62'], [843, '#4a4f51'], [861, '#3b3f40'], [876, '#292c2e'], [900, '#292c2e']]],
  [620, [[702, '#64696d'], [708, '#757e83'], [720, '#828d92'], [745, '#8a969d'], [765, '#8c979e'], [780, '#828d92'], [797, '#737c81'], [817, '#666c74'], [838, '#545b60'], [858, '#414546'], [878, '#2a2d2f'], [895, '#292c2e']]],
  [650, [[686, '#62686b'], [694, '#798387'], [710, '#88949a'], [740, '#92a0a7'], [760, '#a3b0b8'], [775, '#929ea5'], [790, '#828d92'], [815, '#6c7379'], [840, '#585e65'], [862, '#424647'], [884, '#2a2d2f'], [900, '#292c2e']]],
  [680, [[667, '#61676b'], [680, '#7d878b'], [700, '#8b979e'], [730, '#99a6ae'], [747, '#afbdc4'], [761, '#c8d5dc'], [776, '#a2afb6'], [790, '#87929a'], [820, '#6d757a'], [848, '#565d63'], [872, '#404445'], [894, '#292c2e']]],
  [720, [[627, '#646a6d'], [645, '#7f898e'], [680, '#929ea6'], [713, '#a3b0b8'], [731, '#c2ced5'], [752, '#dce8f0'], [768, '#bfccd3'], [784, '#929ea4'], [805, '#7c868b'], [838, '#666d74'], [875, '#444949'], [910, '#2a2d2f']]],
  [745, [[608, '#6c7377'], [630, '#849096'], [670, '#939fa7'], [708, '#a3b0b8'], [724, '#c0ccd3'], [745, '#d2dee5'], [762, '#b8c5cc'], [780, '#929da4'], [808, '#79838a'], [845, '#646a72'], [885, '#434748'], [924, '#2a2d2f']]],
  [780, [[608, '#87929a'], [640, '#8e9aa2'], [680, '#96a3ab'], [705, '#9eabb3'], [720, '#adb9c1'], [738, '#b7c4cb'], [757, '#a8b5bc'], [780, '#8c989e'], [812, '#757f84'], [850, '#636971'], [895, '#474c4d'], [944, '#2d3032']]],
  [815, [[608, '#8e9aa2'], [640, '#95a1a9'], [680, '#9ba8b0'], [705, '#a0adb5'], [720, '#a3b0b8'], [738, '#9faab1'], [757, '#949fa6'], [780, '#858f95'], [812, '#747d82'], [850, '#646b73'], [895, '#4b5153'], [944, '#383c3d']]],
];

function mix(a, b, t) {
  const channel = (c, i) => parseInt(c.slice(i, i + 2), 16);
  const parts = [1, 3, 5].map((i) => Math.round(channel(a, i) + (channel(b, i) - channel(a, i)) * t));
  return `rgb(${parts.join(',')})`;
}

function stopsAt(y) {
  let i = 0;
  while (i < shading.length - 2 && y > shading[i + 1][0]) i += 1;
  const [y0, a] = shading[i];
  const [y1, b] = shading[i + 1];
  const t = Math.min(1, Math.max(0, (y - y0) / (y1 - y0)));
  return a.map(([x, color], k) => ({ x: x + (b[k][0] - x) * t, color: mix(color, b[k][1], t) }));
}

const slices = Array.from({ length: 240 }, (_, i) => 336 + i * 2);
const LEFT = 600;
const SPAN = 400;

function Model() {
  return (
    <svg viewBox="308 198 817 627" className="block w-full" role="img" aria-label="PRT0003">
      <defs>
        <clipPath id="body">
          <path d="M686 340L688 350L695 363L706 390L714 420L720 452L724 485L724.500 515L722 542L719 566L710 603L694 638L671 674L644 704L613 731Q607 738 608 747A168.600 52.200 4.900 0 0 945 773L942 764L933 748L918 720L907 692L896 655L890 620L889.500 580L893 543L905 498L922 461L950 420L985 382L991 366Z" />
        </clipPath>
        {slices.map((y) => (
          <linearGradient key={y} id={`slice${y}`} gradientUnits="userSpaceOnUse" x1={LEFT} x2={LEFT + SPAN} y1="0" y2="0">
            {stopsAt(y).map((s, k) => (
              <stop key={k} offset={(s.x - LEFT) / SPAN} stopColor={s.color} />
            ))}
          </linearGradient>
        ))}
      </defs>
      <g clipPath="url(#body)">
        {slices.map((y) => (
          <rect key={y} x={LEFT} y={y} width={SPAN} height="3" fill={`url(#slice${y})`} />
        ))}
      </g>
      <ellipse
        cx="838.500"
        cy="353"
        rx="153.600"
        ry="47.100"
        transform="rotate(5.360 838.500 353)"
        fill="#666e75"
        shapeRendering="crispEdges"
      />
      <path
        d="M688 350C708 390 722 440 724.500 495C726 555 712 625 680 672C660 705 636 732 611 756M896 655C904 690 918 722 942 765"
        fill="none"
        stroke="#0c98cc"
        shapeRendering="crispEdges"
      />
    </svg>
  );
}

function Watermark() {
  return (
    <div className="absolute bottom-[7px] right-[5px] flex h-[60px] w-[206px] bg-white/30">
      <svg width="58" height="60" viewBox="0 0 60 60" fill="none" className="shrink-0" aria-hidden="true">
        <path d="M28 35C20 32 10 38 10 45C11 51 19 49 24 43" stroke="#c3cad2" strokeWidth="2.500" />
        <path
          fillRule="evenodd"
          d="M3 12C3 3 15 2 26 7C38 13 45 26 42 36C39 44 29 42 19 35C9 28 3 20 3 12ZM8 13C9 20 14 27 22 32C31 38 38 39 40 33C42 25 34 14 24 9C15 5 8 6 8 13Z"
          fill="#33485a"
          fillOpacity=".8"
        />
        <path
          fillRule="evenodd"
          d="M45 21C54 18 60 24 58 34C56 46 45 58 35 58C27 58 24 50 28 43C29 50 32 54 37 53C44 51 52 41 53 33C54 25 50 22 45 21Z"
          fill="#eda4a8"
        />
        <path d="M31 42C34 32 39 25 46 21.500" stroke="#eda4a8" strokeWidth="1.500" />
      </svg>
      <div className="flex flex-col whitespace-nowrap">
        <span className="ml-3 mt-px text-3xl font-bold leading-9 text-[#a4dbb8] [font-family:'Noto_Sans_CJK_SC',sans-serif]">
          野火论坛
        </span>
        <span className="mt-[3px] text-[15px] leading-[18px] text-[#cfe9ea] [font-family:'Noto_Sans',sans-serif]">
          www.proewildfire.cn
        </span>
      </div>
    </div>
  );
}

export default function App() {
  return (
    <div className="flex min-h-screen flex-col overflow-hidden border-l border-t border-[#5b5759] bg-[#fcfcfc] [font-family:'Liberation_Sans','Noto_Sans_CJK_SC',sans-serif]">
      <div className="flex flex-1 flex-col border-l-[3px] border-t-[3px] border-[#9b9796]">
        <TitleBar />
        <RibbonTabs />
        <Ribbon />
        <div className="flex flex-1">
          <ModelTree />
          <main className="relative flex min-w-0 flex-1 flex-col">
            <ViewToolbar />
            <Model />
            <Watermark />
          </main>
        </div>
      </div>
    </div>
  );
}
